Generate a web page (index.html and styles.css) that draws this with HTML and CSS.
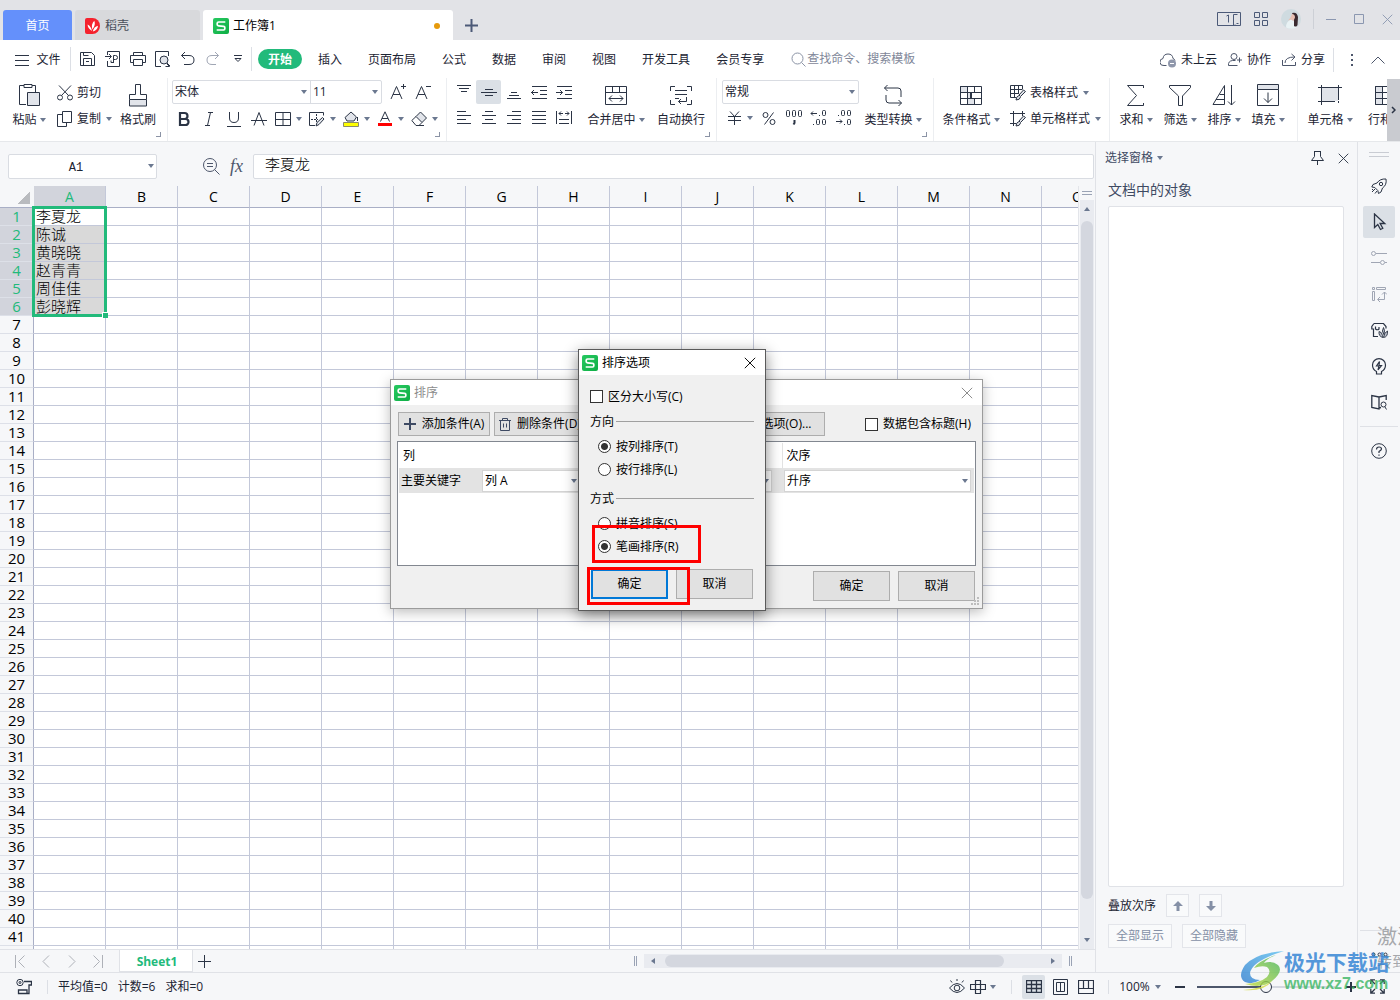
FILE: index.html
```html
<!DOCTYPE html>
<html lang="zh-CN">
<head>
<meta charset="utf-8">
<title>工作簿1</title>
<link rel="stylesheet" href="styles.css">
</head>
<body>
<svg class="defs" aria-hidden="true">
  <symbol id="caret" viewBox="0 0 6 4"><path d="M0 0h6L3 4z"/></symbol>
  <linearGradient id="lg" x1="0" y1="0" x2="1" y2="1"><stop offset="0" stop-color="#27c961"/><stop offset="1" stop-color="#0fae45"/></linearGradient>
  <symbol id="logo" viewBox="0 0 16 16"><rect width="16" height="16" rx="2" fill="url(#lg)"/><path d="M12.300 4H5.600Q4.200 4 4.200 5.200v1.400Q4.200 7.800 5.600 7.900l5 .5q1.200.1 1.200 1.200v1.200q0 1.200-1.200 1.200H3.700" fill="none" stroke="#fff" stroke-width="1.700"/></symbol>
  <symbol id="close" viewBox="0 0 12 12"><path d="M.8.8l10.400 10.400M11.200.8L.8 11.200"/></symbol>
</svg>

<header class="titlebar">
  <button class="tab home">首页</button>
  <button class="tab docer">
    <svg width="16" height="16" viewBox="0 0 16 16"><path d="M0 2q0-2 2-2h5.500a7.500 8 0 0 1 0 16H2q-2 0-2-2z" fill="#f5222d"/><path d="M7 13Q2.500 10 2.600 6.500 6 8 7 13zM7.300 11.500Q6 6 9.300 2.800 11 7 7.300 11.500zM7.800 13.500Q9 8.600 13 7.800 12.500 12.500 7.800 13.500z" fill="#fff"/></svg>
    稻壳</button>
  <button class="tab book"><svg width="16" height="16"><use href="#logo"/></svg>工作簿1<span class="dot"></span></button>
  <button class="newtab" aria-label="新建"><svg class="ic" width="13" height="13" viewBox="0 0 13 13"><path d="M6.500 0v13M0 6.500h13" stroke-width="2"/></svg></button>
  <div class="wintools">
    <button aria-label="窗口"><svg class="ic" width="24" height="14" viewBox="0 0 24 14"><path d="M.5.5h23v13H.5zM16.500 13V2.500h4M18 13v-.5M19.500 11.500h2M9.500 4l2-1v7.500"/></svg></button>
    <button aria-label="应用"><svg class="ic" width="14" height="14" viewBox="0 0 14 14"><path d="M.5.5h5v5h-5zM8.500.5h5v5h-5zM.5 8.500h5v5h-5zM8.500 8.500h5v5h-5z"/></svg></button>
    <button aria-label="账号"><svg width="20" height="20" viewBox="0 0 20 20"><circle cx="10" cy="10" r="10" fill="#cfdbe0"/><path d="M5 18.500q0-6 5-8l5 3 .500 5q-5 2.500-10.500 0z" fill="#e9f2f4"/><path d="M11 4q5-1.500 6 4l-.5 8q-1 2.500-3.500 1V9z" fill="#3a2a30"/><path d="M11 5q3 0 3 3.500l-1.500 3.500-2.500-1.500-3 1 2.500-3z" fill="#e8c0b4"/></svg></button>
    <i class="sep"></i>
    <button aria-label="最小化"><svg class="ic pale" width="10" height="11" viewBox="0 0 10 11"><path d="M0 5.500h10"/></svg></button>
    <button aria-label="最大化"><svg class="ic pale" width="10" height="10" viewBox="0 0 10 10"><path d="M.5.5h9v9h-9z"/></svg></button>
    <button aria-label="关闭"><svg class="ic pale" width="11" height="11"><use href="#close"/></svg></button>
  </div>
</header>

<nav class="menubar">
  <button class="file"><svg class="ic" width="14" height="11" viewBox="0 0 14 11"><path d="M0 .5h14M0 5.500h14M0 10.500h14"/></svg>文件</button>
  <i class="sep"></i>
  <div class="quick">
    <button aria-label="保存"><svg class="ic" width="16" height="16" viewBox="0 0 16 16"><path d="M.5 1.500h11l3 3v10H.500zM3.500 14V7.500h8V14M3.500 1.500v3h5M6 10.500h3"/></svg></button>
    <button aria-label="输出PDF"><svg class="ic" width="16" height="16" viewBox="0 0 16 16"><path d="M2.500 4V.500h12v15h-12V10M0 5.500h6M4 3l2.500 2.500L4 8M8.500 12V4.500h2q2 0 2 2t-2 2h-2M8.500 11.500H6v-2"/></svg></button>
    <button aria-label="打印"><svg class="ic" width="16" height="16" viewBox="0 0 16 16"><path d="M3.500 4.500v-3h9v3M3 11.500H.500v-7h15v7H13M3.500 8.500h9v6h-9z"/></svg></button>
    <button aria-label="打印预览"><svg class="ic" width="16" height="16" viewBox="0 0 16 16"><path d="M13.500 5V.500H.500v15H6M12 13l2.500 2.500h-4"/><circle cx="9" cy="9" r="4" fill="#e1e4ea"/><path d="M12 12l3 3"/></svg></button>
    <button aria-label="撤销"><svg class="ic" width="16" height="16" viewBox="0 0 16 16"><path d="M5 1L1.500 4.500 5 8M1.500 4.500H9q5 0 5 4.500t-5 4.500H4"/></svg></button>
    <button aria-label="重做"><svg class="ic faint" width="16" height="16" viewBox="0 0 16 16"><path d="M10 1l3.500 3.500L10 8M13.500 4.500H7q-5 0-5 4.500t5 4.500h4"/></svg></button>
    <button aria-label="更多"><svg class="ic" width="8" height="8" viewBox="0 0 8 8"><path d="M0 .5h8M1 3.500l3 3 3-3z"/></svg></button>
  </div>
  <i class="sep"></i>
  <div class="tabs">
    <button class="active">开始</button><button>插入</button><button>页面布局</button><button>公式</button><button>数据</button><button>审阅</button><button>视图</button><button>开发工具</button><button>会员专享</button>
  </div>
  <label class="search"><svg class="ic" width="15" height="15" viewBox="0 0 15 15"><circle cx="6.500" cy="6.500" r="5.500"/><path d="M10.500 10.500l4 4"/></svg><input type="text" placeholder="查找命令、搜索模板" aria-label="查找"></label>
  <div class="share">
    <button><svg class="ic" width="17" height="15" viewBox="0 0 17 15"><path d="M6.500 12.500H4A3.500 3.500 0 0 1 3 5.500Q3.500 1 8 1t5 4.500q1.500.5 2 2"/><circle cx="12" cy="10.500" r="4" fill="#8f97ab" stroke="none"/><path d="M10 10.500h4" stroke="#fff"/></svg>未上云</button>
    <button><svg class="ic" width="15" height="14" viewBox="0 0 15 14"><circle cx="6" cy="3.500" r="3"/><path d="M9.500 12.500h-9q-.500-4.500 4-5h3M11.500 4.500v5M9 7h5"/></svg>协作</button>
    <button><svg class="ic" width="15" height="14" viewBox="0 0 15 14"><path d="M.5 7v5.500h13V9M3 10q0-6 9.500-6M9.500 1l3.500 3-3.500 3.500"/></svg>分享</button>
    <i class="sep"></i>
    <button aria-label="更多选项"><svg width="2" height="13" viewBox="0 0 2 13" fill="#4d566b"><path d="M0 0h2v2H0zM0 5h2v2H0zM0 10h2v2H0z"/></svg></button>
    <button class="fold" aria-label="收起功能区"><svg class="ic" width="14" height="8" viewBox="0 0 14 8"><path d="M.5 7.500l6.500-6.500 6.500 6.500"/></svg></button>
  </div>
</nav>

<section class="ribbon" aria-label="开始">
  <div class="group clip">
    <button class="big"><svg class="ic" width="24" height="24" viewBox="0 0 24 24"><path d="M7 2.500H2.500v19H9M15 2.500h3.500V9"/><path d="M7 1.500h8v3H7z"/><path d="M10.500 9.500h12v13h-12z" fill="#e1e4ea"/></svg><span>粘贴<svg class="caret"><use href="#caret"/></svg></span></button>
    <div class="pair">
      <button><svg class="ic" width="16" height="16" viewBox="0 0 16 16"><path d="M2 .5l9.500 10M14 .500L4.500 10.500"/><circle cx="3" cy="12.500" r="2.500"/><circle cx="13" cy="12.500" r="2.500"/></svg>剪切</button>
      <button><svg class="ic" width="16" height="16" viewBox="0 0 16 16"><path d="M5 3.500H.500v12h9V12M5.500.5h9v11h-9z"/></svg>复制<svg class="caret"><use href="#caret"/></svg></button>
    </div>
    <button class="big"><svg class="ic" width="24" height="24" viewBox="0 0 24 24"><path d="M3.500 16.500v-5h6V1.500h5v10h6v5"/><path d="M3.500 16.500h17v6.500h-17z" fill="#e1e4ea"/></svg><span>格式刷</span></button>
    <i class="corner"></i>
  </div>

  <div class="group font">
    <div class="toprow">
      <div class="combo"><label class="pick fontname"><select aria-label="字体"><option>宋体</option></select><svg class="caret"><use href="#caret"/></svg></label><label class="pick fontsize"><select aria-label="字号"><option>11</option></select><svg class="caret"><use href="#caret"/></svg></label></div>
      <button class="sm" aria-label="增大字号"><svg class="ic" width="18" height="18" viewBox="0 0 18 18"><path d="M2 16L7.500 3.500 13 16M4 11.500h7M12 3.500h5M14.500 1v5"/></svg></button>
      <button class="sm" aria-label="减小字号"><svg class="ic" width="18" height="18" viewBox="0 0 18 18"><path d="M2 16L7.500 3.500 13 16M4 11.500h7M12 3.500h5"/></svg></button>
    </div>
    <div class="botrow">
      <button class="sm" aria-label="加粗"><svg class="ic" width="16" height="16" viewBox="0 0 16 16"><path d="M4 2h4.500a2.800 2.800 0 0 1 0 6H4zM4 8h5.500a3 3 0 0 1 0 6H4z" stroke-width="2.200"/></svg></button>
      <button class="sm" aria-label="倾斜"><svg class="ic" width="16" height="16" viewBox="0 0 16 16"><path d="M7 1.500h5M4 14.500h5M9.500 1.500l-3 13"/></svg></button>
      <button class="sm" aria-label="下划线"><svg class="ic" width="16" height="16" viewBox="0 0 16 16"><path d="M3.500 1v6q0 4.500 4.500 4.500T12.500 7V1M1 15.500h14"/></svg></button>
      <button class="sm" aria-label="删除线"><svg class="ic" width="16" height="16" viewBox="0 0 16 16"><path d="M3 14.500L8 1.500l5 13M0 9.500h16"/></svg></button>
      <button class="drop" aria-label="边框"><svg class="ic" width="16" height="16" viewBox="0 0 16 16"><path d="M.5 1.500h15v13H.500zM8 1.500v13M.5 8.500h15"/></svg><svg class="caret"><use href="#caret"/></svg></button>
      <button class="drop" aria-label="绘制边框"><svg class="ic" width="16" height="16" viewBox="0 0 16 16"><path d="M14.500 4.500v-3H.500v13H6"/><path d="M2 8.500h7M7.500 3v8" stroke-dasharray="2 1"/><path d="M7 15l1-3.500 5.500-5 1.500 1.500-5 5.500z" fill="#e1e4ea"/></svg><svg class="caret"><use href="#caret"/></svg></button>
      <button class="drop" aria-label="填充颜色"><svg class="ic" width="16" height="16" viewBox="0 0 16 16"><path d="M2 6.500L8 1l5.500 5-2.500 4H4z" fill="#e1e4ea"/><path d="M14.500 6v4"/><path d="M.5 11.500h15v4H.500z" fill="#ff0" stroke="#8b8b6a"/></svg><svg class="caret"><use href="#caret"/></svg></button>
      <button class="drop" aria-label="字体颜色"><svg class="ic" width="16" height="16" viewBox="0 0 16 16"><path d="M3.500 10.500L8 .8l4.500 9.700M5 7.500h6"/><path d="M1 13.500h14" stroke="red" stroke-width="3"/></svg><svg class="caret"><use href="#caret"/></svg></button>
      <button class="drop" aria-label="清除"><svg class="ic" width="16" height="16" viewBox="0 0 16 16"><path d="M5 5.500L9.500 1l6 6-4.500 4.500z" fill="#e1e4ea"/><path d="M5 5.500L.800 9.500 5 14.500h3l3-3M5 14.500h8"/></svg><svg class="caret"><use href="#caret"/></svg></button>
    </div>
    <i class="corner"></i>
  </div>

  <div class="group align">
    <div class="aligns">
      <button class="sm" aria-label="顶端对齐"><svg class="ic" width="16" height="16" viewBox="0 0 16 16"><path d="M1 1.500h14M3 4.500h10M5 7.500h6"/></svg></button>
      <button class="sm on" aria-label="垂直居中"><svg class="ic" width="16" height="16" viewBox="0 0 16 16"><path d="M4 5.500h8M0 8.500h16M4 11.500h8"/></svg></button>
      <button class="sm" aria-label="底端对齐"><svg class="ic" width="16" height="16" viewBox="0 0 16 16"><path d="M5 8.500h6M3 11.500h10M1 14.500h14"/></svg></button>
      <button class="sm" aria-label="减少缩进"><svg class="ic" width="16" height="16" viewBox="0 0 16 16"><path d="M1 2.500h15M9 6.500h7M9 10.500h7M1 14.500h15M0 8.500h7M3 6L.500 8.500 3 11"/></svg></button>
      <button class="sm" aria-label="增加缩进"><svg class="ic" width="16" height="16" viewBox="0 0 16 16"><path d="M1 2.500h15M9 6.500h7M9 10.500h7M1 14.500h15M0 8.500h6.500M4 6l2.500 2.500L4 11"/></svg></button>
      <button class="sm" aria-label="左对齐"><svg class="ic" width="16" height="16" viewBox="0 0 16 16"><path d="M1 1.500h9M1 5.500h14M1 9.500h9M1 13.500h14"/></svg></button>
      <button class="sm" aria-label="水平居中"><svg class="ic" width="16" height="16" viewBox="0 0 16 16"><path d="M4 1.500h8M1 5.500h14M4 9.500h8M1 13.500h14"/></svg></button>
      <button class="sm" aria-label="右对齐"><svg class="ic" width="16" height="16" viewBox="0 0 16 16"><path d="M6 1.500h9M1 5.500h14M6 9.500h9M1 13.500h14"/></svg></button>
      <button class="sm" aria-label="两端对齐"><svg class="ic" width="16" height="16" viewBox="0 0 16 16"><path d="M1 1.500h14M1 5.500h14M1 9.500h14M1 13.500h14"/></svg></button>
      <button class="sm" aria-label="分散对齐"><svg class="ic" width="16" height="16" viewBox="0 0 16 16"><path d="M.5 1v13M15.500 1v13M3 9.500h10M3 13.500h10M3 3.500h4M9 3.500h4M5 1.500l-2 2 2 2M11 1.500l2 2-2 2"/></svg></button>
    </div>
    <button class="big w80"><svg class="ic" width="24" height="24" viewBox="0 0 24 24"><path d="M1.500 3.500h21v18h-21zM1.500 9.500h21M8.500 3.500v6M15.500 3.500v6M5 15.500h14M8 12.500l-3 3 3 3M16 12.500l3 3-3 3"/></svg><span>合并居中<svg class="caret"><use href="#caret"/></svg></span></button>
    <button class="big w50"><svg class="ic" width="24" height="24" viewBox="0 0 24 24"><path d="M6 3.500H1.500V8M18 3.500h4.500V8M6 21.500H1.500V17M18 21.500h4.500V17M6 7.500h12M6 11.500h12M6 15.500h4M17.500 14v4.500h-8M12 16l-2.500 2.500L12 21"/></svg><span>自动换行</span></button>
    <i class="corner"></i>
  </div>

  <div class="group number">
    <div class="numbers">
      <label class="pick format"><select aria-label="数字格式"><option>常规</option></select><svg class="caret"><use href="#caret"/></svg></label>
      <div class="botrow">
        <button class="drop" aria-label="货币"><svg class="ic" width="16" height="16" viewBox="0 0 16 16"><path d="M4 1.500l4.500 5 4.500-5M2 6.500h13M2 10.500h13M8.500 6.500V15"/></svg><svg class="caret"><use href="#caret"/></svg></button>
        <button class="sm" aria-label="百分比"><svg class="ic" width="14" height="14" viewBox="0 0 14 14"><circle cx="3.500" cy="4" r="2.500"/><circle cx="10.500" cy="11" r="2.500"/><path d="M11.500 1.500l-9 12"/></svg></button>
        <button class="sm" aria-label="千位分隔"><svg class="ic" width="18" height="16" viewBox="0 0 18 16"><rect x="1.500" y=".5" width="3" height="6" rx="1"/><rect x="7.500" y=".5" width="3" height="6" rx="1"/><rect x="13.500" y=".5" width="3" height="6" rx="1"/><path d="M9.500 10v3l-1 1.500" stroke-width="2"/></svg></button>
        <button class="sm" aria-label="增加小数位"><svg class="ic" width="17" height="16" viewBox="0 0 17 16"><rect x="12.500" y=".5" width="3" height="5" rx="1"/><rect x="6.500" y="9.500" width="3" height="5" rx="1"/><rect x="12.500" y="9.500" width="3" height="5" rx="1"/><path d="M1 3.500h6M3 1.500l-2 2 2 2M9 5.500h1M3 14.500h1"/></svg></button>
        <button class="sm" aria-label="减少小数位"><svg class="ic" width="17" height="16" viewBox="0 0 17 16"><rect x="6.500" y=".5" width="3" height="5" rx="1"/><rect x="12.500" y=".5" width="3" height="5" rx="1"/><rect x="12.500" y="9.500" width="3" height="5" rx="1"/><path d="M1 11.500h6M5 9.500l2 2-2 2M9 14.500h1M3 5.500h1"/></svg></button>
      </div>
    </div>
    <button class="big w68"><svg class="ic" width="24" height="24" viewBox="0 0 24 24"><path d="M6.500 2l-3 3 3 3M3.500 5H17q3 0 3 3v6M17.500 17l3 3-3 3M20.500 20H8q-3 0-3-3v-5"/></svg><span>类型转换<svg class="caret"><use href="#caret"/></svg></span></button>
    <i class="corner"></i>
  </div>

  <div class="group styles">
    <button class="big w62"><svg class="ic" width="24" height="24" viewBox="0 0 24 24"><path d="M1.500 3.500h7v6h-7zM8.500 9.500h4v6h-4zM8.500 15.500h7v6h-7z" fill="#e1e4ea"/><path d="M1.500 3.500h21v18h-21zM1.500 9.500h21M1.500 15.500h21M15.500 3.500v6M8.500 3.500v18M15.500 15.500v6M11.500 9.500v6"/></svg><span>条件格式<svg class="caret"><use href="#caret"/></svg></span></button>
    <div class="pair">
      <button><svg class="ic" width="16" height="16" viewBox="0 0 16 16"><path d="M12.500 4V.500H.500v12H6M.500 4.500h12M.5 8.500H9M4.500.5v12M8.500.5v8"/><path d="M13.500 5l2 1.500-5 5-1.500-1.500zM9 10.500q-3 1-3 4.500 4 0 4.500-3" fill="#e1e4ea"/></svg>表格样式<svg class="caret"><use href="#caret"/></svg></button>
      <button><svg class="ic" width="16" height="16" viewBox="0 0 16 16"><path d="M0 2.500h15M3.500 0v15M0 12.500h6M12.500 0v5"/><path d="M13.500 5l2 1.500-5 5-1.500-1.500zM9 10.500q-3 1-3 4.500 4 0 4.500-3" fill="#e1e4ea"/></svg>单元格样式<svg class="caret"><use href="#caret"/></svg></button>
    </div>
  </div>

  <div class="group edit">
    <button class="big w44"><svg class="ic" width="24" height="24" viewBox="0 0 24 24"><path d="M19.500 5V2.500h-16l9 10-9 10h16V20"/></svg><span>求和<svg class="caret"><use href="#caret"/></svg></span></button>
    <button class="big w44"><svg class="ic" width="24" height="24" viewBox="0 0 24 24"><path d="M1.500 2.500h21v2l-8 8.500v9.500h-4V13l-9-8.500z"/></svg><span>筛选<svg class="caret"><use href="#caret"/></svg></span></button>
    <button class="big w44"><svg class="ic" width="24" height="24" viewBox="0 0 24 24"><path d="M1 21.500L12.500 2.500v19zM4 16.500h8.500M7.500 11.500h5M19.500 2v20M16 18.500l3.500 3.500 3.500-3.500"/></svg><span>排序<svg class="caret"><use href="#caret"/></svg></span></button>
    <button class="big w44"><svg class="ic" width="24" height="24" viewBox="0 0 24 24"><path d="M1.500 1.500h21v5h-21z" fill="#e1e4ea"/><path d="M1.500 6.500v16h21v-16M12 9.500v10M8 15.500l4 4 4-4"/></svg><span>填充<svg class="caret"><use href="#caret"/></svg></span></button>
  </div>

  <div class="group cells">
    <button class="big w58"><svg class="ic" width="24" height="24" viewBox="0 0 24 24"><path d="M4 5h16v13H4z" fill="#e1e4ea" stroke="none"/><path d="M0 4.500h24M0 18.500h17M3.500 2v20M20.500 2v15M20.500 18v2"/></svg><span>单元格<svg class="caret"><use href="#caret"/></svg></span></button>
    <button class="big w54"><svg class="ic" width="24" height="24" viewBox="0 0 24 24"><path d="M1.500 3.500h7v18h-7z" fill="#e1e4ea"/><path d="M1.500 3.500h21v18h-21zM1.500 9.500h21M1.500 15.500h21M8.500 3.500v18M16.500 3.500v18"/></svg><span>行和列</span></button>
  </div>
  <button class="more" aria-label="向右滚动"><svg class="ic" width="5" height="8" viewBox="0 0 5 8"><path d="M1 1l3 3-3 3" stroke-width="1.500"/></svg></button>
</section>

<main class="main">
  <section class="workbook">
    <div class="formulabar">
      <label class="namebox"><input type="text" value="A1" aria-label="名称框"><svg class="caret"><use href="#caret"/></svg></label>
      <button aria-label="浏览公式"><svg class="ic" width="17" height="17" viewBox="0 0 17 17"><circle cx="7" cy="7" r="6.500"/><path d="M4 5.500h6M4 8.500h6M11.500 11.500l5 5"/></svg></button>
      <button class="fx" aria-label="插入函数">fx</button>
      <input class="formula" type="text" value="李夏龙" aria-label="编辑栏">
    </div>
    <div class="sheetarea">
      <div class="sheet"><table id="grid"></table><div class="selection"><i></i></div></div>
      <div class="vscroll"><i class="split"></i><div class="rail-v"><svg class="caret up"><use href="#caret"/></svg><i class="thumb"></i><svg class="caret"><use href="#caret"/></svg></div></div>
    </div>
    <div class="sheetbar">
      <div class="sheetnav">
        <button aria-label="第一个"><svg class="ic" width="10" height="13" viewBox="0 0 10 13"><path d="M.5 0v13M9.500.5l-6 6 6 6"/></svg></button>
        <button aria-label="上一个"><svg class="ic" width="10" height="13" viewBox="0 0 10 13"><path d="M8 .5l-6 6 6 6"/></svg></button>
        <button aria-label="下一个"><svg class="ic" width="10" height="13" viewBox="0 0 10 13"><path d="M2 .5l6 6-6 6"/></svg></button>
        <button aria-label="最后一个"><svg class="ic" width="10" height="13" viewBox="0 0 10 13"><path d="M9.500 0v13M.5.5l6 6-6 6"/></svg></button>
      </div>
      <button class="sheettab">Sheet1</button>
      <button class="addsheet" aria-label="新建工作表"><svg class="ic" width="13" height="13" viewBox="0 0 13 13"><path d="M6.500 0v13M0 6.500h13"/></svg></button>
      <div class="hscroll"><i class="grip"></i><div class="rail-h"><svg class="caret left"><use href="#caret"/></svg><i class="thumb"></i><svg class="caret right"><use href="#caret"/></svg></div><i class="grip"></i></div>
    </div>
  </section>

  <aside class="pane">
    <header><button>选择窗格<svg class="caret"><use href="#caret"/></svg></button>
      <button class="pin" aria-label="固定"><svg class="ic" width="13" height="14" viewBox="0 0 13 14"><path d="M3 .5h7M3.500.5v5l-3 4h12l-3-4v-5M6.500 9.500V14"/></svg></button>
      <button aria-label="关闭窗格"><svg class="ic" width="11" height="11"><use href="#close"/></svg></button></header>
    <h2>文档中的对象</h2>
    <div class="objects"></div>
    <div class="order"><span>叠放次序</span>
      <button aria-label="上移"><svg width="10" height="12" viewBox="0 0 10 12"><path d="M5 1l5 5H6.500v5h-3V6H0z"/></svg></button>
      <button aria-label="下移"><svg width="10" height="12" viewBox="0 0 10 12"><path d="M5 11L0 6h3.500V1h3v5H10z"/></svg></button></div>
    <div class="showhide"><button>全部显示</button><button>全部隐藏</button></div>
  </aside>

  <nav class="rail">
    <i class="handle"></i>
    <button aria-label="助手"><svg class="ic" width="16" height="16" viewBox="0 0 16 16"><path d="M15 1Q9 .5 6 5L2 6.500.800 9l3 .5 3 3 .7 3 2.500-1.500L11.500 10Q16 7 15 1zM4 11l-3 3M6 13l-2 2.500M2 11l-1 1"/><circle cx="10" cy="6" r="1.700"/></svg></button>
    <button class="on" aria-label="选择"><svg class="ic" width="16" height="18" viewBox="0 0 16 18"><path d="M3.500 1v13.500l3.300-3 2.700 5 2.300-1.200-2.700-4.800h4.700z" stroke-width="1.300"/></svg></button>
    <button aria-label="属性"><svg class="ic faint" width="16" height="16" viewBox="0 0 16 16"><circle cx="2.500" cy="3.500" r="2"/><circle cx="11.500" cy="12.500" r="2"/><path d="M5 3.500h11M0 12.500h9M14 12.500h2"/></svg></button>
    <button aria-label="转换"><svg class="ic faint" width="16" height="16" viewBox="0 0 16 16"><path d="M1.500 1.500h2v2h-2zM5.500 1.500h9v2h-9zM1.500 5.500h2v9h-2zM13.500 6v7.500H7M11 8.500l2.500-2.500L16 8.500M9 11l-2.500 2.500L9 16"/></svg></button>
    <button aria-label="稻壳资源"><svg class="ic" width="17" height="16" viewBox="0 0 17 16"><path d="M3 1.500h9.500l2.500 3v2M3 1.500L.800 4.500v2.500h1.700v7.500H7M4.500 4.500v2.500q2 1.500 3.500 0V5" stroke-width="1.200"/><path d="M8 9.500q3 .5 3.500 4L12 15.500Q7.500 14.500 8 9.500zM12.500 5.500q2 3 .300 7-2.600-3.500-.300-7zM16.500 9q.5 6-4 6.500.5-5 4-6.500z" fill="#b8bdc8" stroke-width=".9"/></svg></button>
    <button aria-label="灵感"><svg class="ic" width="16" height="17" viewBox="0 0 16 17"><path d="M5.500 13.500Q1.500 11.500 1.500 7a6.500 6.300 0 0 1 13 0q0 4.500-4 6.500v2.500h-5zM8.500 3.500L5.500 8H8l-1 4 3.500-4.500H8z" stroke-width="1.200"/></svg></button>
    <button aria-label="查阅"><svg class="ic" width="16" height="16" viewBox="0 0 16 16"><path d="M8 3L.8 1.500v12L8 15zM8 3l7.200-1.500V6M8 14l2-.5" stroke-width="1.300"/><circle cx="12.500" cy="10.500" r="2.500"/><path d="M14 13l1.500 2.500"/></svg></button>
    <i class="line"></i>
    <button aria-label="帮助"><svg class="ic" width="16" height="16" viewBox="0 0 16 16"><circle cx="8" cy="8" r="7.300"/><path d="M5.500 6.500q0-2.500 2.500-2.500t2.500 2Q10.500 7 8 8.500V10M8 11.500v1.300" stroke-width="1.200"/></svg></button>
    <i class="line low"></i>
    <button class="dots" aria-label="更多"><svg class="ic" width="17" height="5" viewBox="0 0 17 5"><circle cx="2.500" cy="2.500" r="1.500"/><circle cx="8.500" cy="2.500" r="1.500"/><circle cx="14.500" cy="2.500" r="1.500"/></svg></button>
  </nav>
</main>

<footer class="status">
  <button class="macro" aria-label="宏"><svg class="ic" width="16" height="16" viewBox="0 0 16 16"><circle cx="4" cy="3.500" r="3.200"/><circle cx="4" cy="3.500" r="1"/><path d="M8 2.500h7.500V6H13v8.500H2.500V11H11v3.500" stroke-width="1.300"/></svg></button>
  <i class="sep"></i>
  <span>平均值=0</span><span>计数=6</span><span>求和=0</span>
  <div class="view">
    <button class="eye" aria-label="护眼"><svg class="ic" width="16" height="15" viewBox="0 0 16 15"><path d="M.5 9q7.500-9 15 0-7.500 9-15 0zM8 0v2M1.500 1.500L3 3.500M14.500 1.500L13 3.500"/><circle cx="8" cy="9" r="2.800"/></svg></button>
    <button class="cross" aria-label="阅读模式"><svg class="ic" width="16" height="14" viewBox="0 0 16 14"><path d="M5.500.5h5v13h-5zM.5 4.500h15v5H.500z" stroke-width="1.200"/></svg><svg class="caret"><use href="#caret"/></svg></button>
    <i class="sep"></i>
    <button class="on" aria-label="普通视图"><svg class="ic" width="16" height="13" viewBox="0 0 16 13"><path d="M.5.5h15v12H.500zM.5 4.500h15M.5 8.500h15M5.500.5v12M10.500.5v12" stroke-width="1.300"/></svg></button>
    <button aria-label="分页预览"><svg class="ic" width="15" height="16" viewBox="0 0 15 16"><path d="M.5.5h14v15H.500zM3.500 3.500h8v9h-8zM7.500 3.500v9"/></svg></button>
    <button aria-label="页面布局"><svg class="ic" width="16" height="14" viewBox="0 0 16 14"><path d="M.5.5h15v13H.500zM.5 8.500h10v-8M5.500.5v8M10.500 8.500h5" stroke-width="1.200"/></svg></button>
    <i class="sep"></i>
    <button class="zoomval">100%<svg class="caret"><use href="#caret"/></svg></button>
    <button aria-label="缩小"><svg class="ic" width="10" height="10" viewBox="0 0 10 10"><path d="M0 5h10" stroke-width="2"/></svg></button>
    <input type="range" min="0" max="100" value="50" aria-label="缩放">
    <button aria-label="放大"><svg class="ic" width="10" height="10" viewBox="0 0 10 10"><path d="M0 5h10M5 0v10" stroke-width="2"/></svg></button>
    <button aria-label="全屏"><svg class="ic" width="15" height="15" viewBox="0 0 15 15"><path d="M.8 5V.8H5M.8.800l4.200 4.200M10 .8h4.200V5M14.200.800L10 5M.8 10v4.200H5M.800 14.200L5 10M10 14.200h4.200V10M14.200 14.200L10 10" stroke-width="1.300"/></svg></button>
  </div>
</footer>

<section class="dialog sort" aria-label="排序">
  <header><svg width="16" height="16"><use href="#logo"/></svg><h3>排序</h3><button aria-label="关闭"><svg class="ic" width="12" height="12"><use href="#close"/></svg></button></header>
  <div class="tools">
    <button class="btn"><svg class="ic" width="12" height="12" viewBox="0 0 12 12"><path d="M6 0v12M0 6h12" stroke-width="2"/></svg>添加条件(A)</button>
    <button class="btn"><svg class="ic" width="12" height="13" viewBox="0 0 12 13"><path d="M0 2.500h12M3.500 2V.500h5V2M1.500 2.500v10h9v-10M4.500 5.500v4M7.500 5.500v4"/></svg>删除条件(D)</button>
    <button class="btn opt">选项(O)...</button>
    <label><input type="checkbox">数据包含标题(H)</label>
  </div>
  <div class="list">
    <table>
      <tr><th class="c1">列</th><th class="c2"></th><th class="c3"></th><th>次序</th></tr>
      <tr class="row"><td>主要关键字</td>
        <td class="s"><label class="pick"><select aria-label="主要关键字"><option>列 A</option></select><svg class="caret"><use href="#caret"/></svg></label></td>
        <td class="s mid"><label class="pick"><select aria-label="排序依据"><option></option></select><svg class="caret"><use href="#caret"/></svg></label></td>
        <td class="s last"><label class="pick"><select aria-label="次序"><option>升序</option></select><svg class="caret"><use href="#caret"/></svg></label></td></tr>
    </table>
  </div>
  <div class="actions"><button class="btn">确定</button><button class="btn">取消</button></div>
  <svg class="resize" width="9" height="9" viewBox="0 0 9 9"><path d="M6 0h2v2H6zM6 3h2v2H6zM6 6h2v2H6zM3 3h2v2H3zM3 6h2v2H3zM0 6h2v2H0z"/></svg>
</section>

<section class="dialog options" aria-label="排序选项">
  <header><svg width="16" height="16"><use href="#logo"/></svg><h3>排序选项</h3><button aria-label="关闭"><svg class="ic" width="12" height="12"><use href="#close"/></svg></button></header>
  <div class="body">
    <label><input type="checkbox">区分大小写(C)</label>
    <fieldset><legend>方向</legend>
      <label><input type="radio" name="dir" checked>按列排序(T)</label>
      <label><input type="radio" name="dir">按行排序(L)</label></fieldset>
    <fieldset><legend>方式</legend>
      <label><input type="radio" name="way">拼音排序(S)</label>
      <label><input type="radio" name="way" checked>笔画排序(R)</label></fieldset>
    <div class="actions"><button class="btn primary">确定</button><button class="btn">取消</button></div>
  </div>
  <i class="mark stroke"></i><i class="mark ok"></i>
</section>

<div class="activate"><b>激活</b><span>转到</span></div>
<div class="watermark">
  <svg width="44" height="42" viewBox="0 0 44 42"><defs><linearGradient id="wb" x1="0" y1="1" x2="1" y2="0"><stop offset="0" stop-color="#2f7fd0"/><stop offset="1" stop-color="#5cc0f0"/></linearGradient><linearGradient id="wg" x1="1" y1="0" x2="0" y2="1"><stop offset="0" stop-color="#41b35c"/><stop offset="1" stop-color="#c6dc3c"/></linearGradient></defs>
    <path d="M44 0Q16 2 5 14Q-3 26 5 31Q12 34 20 29Q10 29 10 22Q12 10 44 0z" fill="url(#wb)"/><path d="M36 4Q18 10 14 17Q22 14 27 16Q32 20 27 26Q20 32 5 33Q22 38 32 30Q44 20 38 14Q32 9 24 12Q26 8 36 4z" fill="url(#wg)"/><path d="M3 39Q22 38 32 30Q24 41 3 39z" fill="#d5dd45"/></svg>
  <div><strong>极光下载站</strong><em>www.xz7.com</em></div>
</div>
<script src="script.js"></script>
</body>
</html>
```
FILE: script.js
```js
// Builds the worksheet grid: 15 columns, 42 rows, names in column A.
const names = ['李夏龙', '陈诚', '黄晓晓', '赵青青', '周佳佳', '彭晓辉'];
const columns = 'ABCDEFGHIJKLMNO'.split('');
const cells = columns.map(() => '<td></td>').join('');
let html = '<thead><tr><th class="all"></th>' +
  columns.map((c, i) => `<th${i ? '' : ' class="on"'}>${c}</th>`).join('') + '</tr></thead><tbody>';
for (let r = 1; r <= 42; r++) {
  const name = names[r - 1];
  html += name
    ? `<tr><th class="on">${r}</th>` + cells.replace('<td>', `<td class="${r > 1 ? 'sel' : ''}">${name}`) + '</tr>'
    : `<tr><th>${r}</th>${cells}</tr>`;
}
document.getElementById('grid').innerHTML = html + '</tbody>';
```
FILE: styles.css
```css
* { box-sizing: border-box; }
body {
  margin: 0; height: 100vh; display: flex; flex-direction: column; overflow: hidden; position: relative;
  font: 12px/18px "Open Sans", "Noto Sans CJK SC", sans-serif; color: #1c2433; background: #f6f7f9;
}
button, input, select { font: inherit; color: inherit; margin: 0; padding: 0; border: 0; background: none; outline: 0; }
button { display: flex; align-items: center; justify-content: center; white-space: nowrap; }
h2, h3 { margin: 0; font-weight: 400; }
svg { flex: none; display: block; }
.defs { position: absolute; width: 0; height: 0; }
.ic { fill: none; stroke: #2b3445; }
.ic.faint { stroke: #a0a6b4; }
.ic.pale { stroke: #8b97b0; }
.caret { width: 6px; height: 4px; fill: #6b7890; }
.sep { width: 1px; background: #dcdfe5; flex: none; }

/* Title bar */
.titlebar { height: 40px; flex: none; display: flex; align-items: flex-end; gap: 3px; padding-left: 3px; background: #e2e3e7; }
.tab { height: 30px; border-radius: 3px 3px 0 0; padding-top: 2px; }
.home { width: 69px; background: #6490fb; color: #fff; }
.docer { width: 125px; background: #d8d9dc; justify-content: flex-start; padding-left: 10px; gap: 4px; color: #4a4f5a; }
.book { width: 250px; background: #fff; justify-content: flex-start; padding: 2px 13px 0 10px; gap: 4px; color: #000; }
.dot { width: 6px; height: 6px; border-radius: 3px; background: #e69a0c; margin-left: auto; }
.newtab { width: 30px; height: 30px; }
.newtab .ic, .wintools .ic { stroke: #4c5a78; }
.wintools { margin-left: auto; height: 38px; align-self: flex-start; display: flex; align-items: center; gap: 12px; padding-right: 5px; }
.wintools .sep { height: 20px; background: #cdd0d6; margin-right: -3px; }
.wintools .ic.pale { stroke: #8b97b0; }
.wintools button { min-width: 16px; }

/* Menu bar */
.menubar { height: 38px; flex: none; display: flex; align-items: center; background: #fff; }
.menubar .sep { height: 24px; }
.file { width: 70px; padding: 2px 0 0 6px; gap: 7px; }
.quick { display: flex; padding: 0 1px 0 4px; }
.quick button { width: 25px; height: 24px; }
.tabs { display: flex; padding-left: 3px; }
.tabs button { padding: 2px 13px 0; height: 20px; }
.tabs .active { padding: 1px 10px 0; margin: 0 3px; border-radius: 10px; background: #22ba7b; color: #fff; font-weight: 700; }
.search { display: flex; align-items: center; gap: 1px; padding-left: 14px; flex: 1; }
.search .ic { stroke: #8c94a6; }
.search input { width: 140px; }
.search input::placeholder { color: #7f8799; opacity: 1; }
.share { display: flex; align-items: center; gap: 11px; padding: 2px 15px 0 0; }
.share button { gap: 4px; }
.share .ic { stroke: #4d566b; }
.share .sep { margin: 0 6px 0 -3px; }
.share .fold { margin-left: 7px; }

/* Ribbon */
.ribbon { height: 64px; flex: none; display: flex; background: #fff; border-bottom: 1px solid #e6e8eb; }
.group { display: flex; align-items: flex-start; position: relative; flex: none; border-left: 1px solid #eceef1; }
.big { flex-direction: column; justify-content: flex-start; padding-top: 5px; }
.big span { display: flex; align-items: center; gap: 3px; height: 26px; }
.pair { padding-top: 1px; }
.pair button { display: flex; justify-content: flex-start; height: 27px; gap: 4px; }
.pair button + button { height: 26px; }
.pair .caret { margin-left: 1px; }
.corner { position: absolute; right: 6px; bottom: 4px; width: 5px; height: 5px; border: solid #8b93a5; border-width: 0 1px 1px 0; }
.clip { width: 167px; padding-left: 12px; border-left: 0; }
.clip .pair { padding-left: 11px; width: 74px; }
.clip > .big:first-child { width: 34px; }
.w80 { width: 80px; } .w68 { width: 68px; } .w62 { width: 62px; } .w58 { width: 58px; }
.w54 { width: 54px; } .w50 { width: 50px; } .w44 { width: 44px; }
.font { width: 279px; padding-left: 4px; flex-direction: column; }
.toprow, .botrow { display: flex; align-items: center; }
.toprow { height: 28px; }
.font .botrow { margin-left: -1px; }
.botrow { height: 26px; }
.combo { display: flex; border: 1px solid #d9dce2; border-radius: 2px; margin: 1px 3px 1px 0; }
.pick { display: flex; align-items: center; height: 22px; }
.pick select { appearance: none; flex: 1; min-width: 0; height: 100%; padding-left: 2px; }
.pick .caret { margin-right: 3px; }
.fontname { width: 138px; border-right: 1px solid #d9dce2; }
.fontsize { width: 70px; }
.sm { width: 25px; height: 24px; }
.drop { width: 34px; height: 24px; gap: 5px; }
.on { background: #dbe0e6; border-radius: 2px; }
.align { width: 270px; padding-left: 4px; }
.aligns { display: grid; grid-template-columns: repeat(5, 25px); grid-auto-rows: 24px; row-gap: 2px; padding-top: 2px; }
.number { width: 217px; padding-left: 5px; }
.numbers { padding-top: 2px; }
.format { width: 137px; height: 24px; border: 1px solid #d9dce2; border-radius: 2px; margin-bottom: 1px; }
.styles { width: 176px; padding-left: 6px; }
.styles .pair { padding-left: 8px; }
.edit { width: 188px; padding-left: 4px; }
.cells { flex: 1 1 0; min-width: 0; overflow: hidden; padding-left: 3px; }
.cells .big { flex: none; }
.more { width: 13px; flex: none; margin-top: 1px; background: #c9cbd0; }

/* Main */
.main { flex: 1; min-height: 0; display: flex; }
.workbook { flex: 1; min-width: 0; display: flex; flex-direction: column; }
.formulabar { height: 44px; flex: none; display: flex; align-items: center; padding: 4px 1px 0 8px; }
.namebox { width: 149px; height: 25px; display: flex; align-items: center; background: #fff; border: 1px solid #d9dce2; border-radius: 2px; margin-right: 46px; }
.namebox input { flex: 1; min-width: 0; text-align: center; padding: 3px 10px 0 5px; font-family: "Liberation Mono", monospace; }
.namebox .caret { margin-right: 2px; }
.formulabar .ic { stroke: #4d566b; }
.fx { width: 33px; font: italic 18px/20px "Liberation Serif", serif; color: #4d566b; }
.formula { flex: 1; min-width: 0; height: 25px; background: #fff; border: 1px solid #d9dce2; border-radius: 2px; padding: 0 0 6px 11px; font-size: 15px; font-weight: 300; color: #000; }
.sheetarea { flex: 1; min-height: 0; display: flex; }
.sheet { flex: 1; min-width: 0; overflow: hidden; position: relative; border-right: 1px solid #e3e5ea; }
#grid { border-collapse: separate; border-spacing: 0; table-layout: fixed; width: 1114px; color: #000; font-size: 15px; line-height: 17px; }
#grid th { padding: 0; font-weight: 400; background: #f6f7f9; border: solid #c3c8d9; border-width: 0 1px 1px 0; height: 18px; }
#grid thead th { height: 22px; width: 72px; font-size: 14px; border-bottom-color: #a9afc6; }
#grid .all { width: 34px; background: linear-gradient(135deg, #f6f7f9 50%, #b9bbbf 50%) 18px 6px / 12px 12px no-repeat #f6f7f9; border-right-color: #f6f7f9; }
#grid .on { background: #d2d4dc; color: #22ba7b; border-radius: 0; }
#grid tbody th { border-right-color: #a9afc6; border-bottom-color: #dde0e8; }
#grid td { padding: 0 0 0 2px; height: 18px; background: #fff; border: solid #c3c8d9; border-width: 0 1px 1px 0; white-space: nowrap; font-weight: 300; }
#grid .sel { background: #d9d9d9; }
.selection { position: absolute; left: 32px; top: 20px; width: 75px; height: 111px; border: 3px solid #22ba7b; }
.selection i { position: absolute; right: -4px; bottom: -4px; width: 6px; height: 6px; background: #22ba7b; border: solid #fff; border-width: 1px 0 0 1px; }
.vscroll { width: 16px; flex: none; display: flex; flex-direction: column; align-items: center; padding-top: 5px; }
.split { width: 10px; height: 4px; border: solid #9aa3b5; border-width: 1px 0; margin-bottom: 5px; }
.rail-v { flex: 1; width: 14px; display: flex; flex-direction: column; align-items: center; justify-content: space-between; background: #e9ebf0; padding: 7px 0; }
.rail-v .thumb { width: 12px; flex: 1; border-radius: 6px; background: #d4d7df; margin: 10px 0 39px; }
.up { transform: rotate(180deg); }
.left { transform: rotate(90deg); }
.right { transform: rotate(-90deg); }
.sheetbar { height: 23px; flex: none; display: flex; align-items: center; border-top: 1px solid #e0e2e7; }
.sheetnav { display: flex; width: 119px; padding-left: 7px; }
.sheetnav button { width: 26px; }
.sheetnav .ic { stroke: #aeb1b8; }
.sheettab { width: 74px; height: 22px; background: #fff; border: solid #e0e2e7; border-width: 0 1px 1px; color: #22ba7b; font-weight: 700; padding: 2px 0 0 2px; }
.addsheet { width: 23px; }
.hscroll { margin-left: auto; width: 461px; display: flex; align-items: center; gap: 7px; padding-right: 23px; }
.grip { width: 3px; height: 10px; border: solid #9aa3b5; border-width: 0 1px; flex: none; }
.rail-h { flex: 1; height: 14px; display: flex; align-items: center; justify-content: space-between; background: #e9ebf0; padding: 0 6px; }
.rail-h .thumb { flex: 1; height: 12px; border-radius: 6px; background: #d4d7df; margin: 0 46px 0 9px; }

/* Selection pane */
.pane { width: 262px; flex: none; display: flex; flex-direction: column; border-left: 1px solid #e0e2e7; padding: 0 13px 24px 12px; color: #3e4a63; }
.pane header { display: flex; align-items: center; height: 32px; margin: 0 -5px 0 -3px; gap: 14px; }
.pane header button { gap: 4px; }
.pane .pin { margin-left: auto; }
.pane h2 { font-size: 14px; line-height: 20px; margin: 6px 0 6px; }
.objects { flex: 1; background: #fff; border: 1px solid #e0e2e7; border-radius: 2px; }
.order { display: flex; align-items: center; gap: 10px; margin-top: 7px; color: #1c2433; }
.order button { width: 23px; height: 23px; border: 1px solid #e3e5ea; fill: #8590a6; background: #f9fafb; }
.showhide { display: flex; gap: 10px; margin-top: 7px; }
.showhide button { width: 64px; height: 24px; border: 1px solid #e3e5ea; color: #8590a6; background: #f9fafb; }

/* Tool rail */
.rail { width: 43px; flex: none; border-left: 1px solid #e0e2e7; display: flex; flex-direction: column; align-items: center; padding-top: 10px; }
.handle { width: 20px; height: 5px; border: solid #c9ccd3; border-width: 1px 0; margin-bottom: 13px; }
.rail button { width: 32px; height: 32px; margin-bottom: 4px; }
.line { width: 38px; height: 1px; background: #dfe1e6; margin: 4px 0 8px; }
.line.low { margin: auto 0 13px; }
.rail .dots { height: 20px; margin-bottom: 8px; }

/* Status bar */
.status { height: 28px; flex: none; display: flex; align-items: center; border-top: 1px solid #e0e2e7; }
.status .sep { height: 14px; }
.macro { width: 47px; }
.status span { margin-right: 10px; }
.macro + .sep { margin-right: 10px; }
.view { margin-left: auto; display: flex; align-items: center; padding-right: 10px; }
.view button { width: 26px; height: 24px; }
.view .eye { width: 22px; }
.view .cross { width: 30px; gap: 4px; }
.view .sep { margin-right: 10px; }
.view .on { width: 23px; margin-right: 2px; }
.view button + .sep { margin-left: 9px; }
.view .cross + .sep { margin: 0 10px 0 13px; }
.view .zoomval { width: 42px; margin-right: 6px; gap: 5px; }
.view input { appearance: none; width: 138px; height: 14px; margin: 0 3px 0 4px; }
.view input::-webkit-slider-runnable-track { height: 2px; background: linear-gradient(90deg, #4c566b 50%, #d4d7df 50%); }
.view input::-webkit-slider-thumb { appearance: none; width: 12px; height: 12px; margin-top: -5px; border: 1px solid #2b3445; border-radius: 6px; background: #f6f7f9; }

/* Dialogs */
.dialog { position: absolute; background: #f0f0f0; border: 1px solid #9b9b9b; color: #000; box-shadow: 0 3px 12px #0004; }
.dialog header { display: flex; align-items: center; gap: 4px; background: #fff; height: 25px; padding: 0 9px 0 3px; }
.dialog h3 { flex: 1; font-size: 12px; }
.dialog .ic { stroke: #3e4a63; }
.dialog header .ic { stroke: #111; }
.dialog label { display: flex; align-items: center; }
.btn { background: #e1e1e1; border: 1px solid #adadad; }
.dialog .actions { display: flex; gap: 8px; }
.dialog .actions .btn { width: 77px; height: 30px; }
.dialog input { appearance: none; width: 13px; height: 13px; border: 1px solid #333; background: #fff; margin-right: 5px; flex: none; }
.dialog input[type=radio] { border-radius: 7px; }
.dialog input[type=radio]:checked { background: radial-gradient(#333 3px, #fff 4px); }
.sort { left: 390px; top: 379px; width: 593px; height: 230px; }
.sort h3 { color: #8c8c8c; }
.dialog.sort header .ic { stroke: #8c8c8c; }
.tools { display: flex; gap: 4px; padding: 7px 11px 5px 7px; }
.tools .btn { width: 92px; height: 24px; gap: 6px; }
.tools .opt { width: 85px; margin-left: 150px; padding-left: 8px; }
.tools label { margin-left: auto; }
.list { margin: 0 6px; height: 125px; background: #fff; border: 1px solid #828790; padding: 1px; }
.list table { width: 100%; border-collapse: collapse; table-layout: fixed; }
.list th { height: 25px; padding: 0 0 0 4px; font-weight: 400; text-align: left; }
.c1 { width: 83px; } .c2 { width: 98px; } .c3 { width: 202px; border-right: 1px solid #e3e3e3; }
.row { background: #e3e3e3; }
.list td { height: 25px; padding: 0 0 0 2px; }
.list td.s { padding: 0; }
.list td.mid { padding-right: 10px; }
.list td.last { padding: 0 3px 0 2px; }
.list .pick { background: #fff; border: 1px solid #d4d4d4; }
.list .pick .caret { margin-right: 2px; }
.sort .actions { justify-content: flex-end; margin: 5px 7px 0; }
.resize { position: absolute; right: 2px; bottom: 2px; fill: #bdbdbd; }
.options { left: 578px; top: 349px; width: 188px; height: 262px; border-color: #5a5a5a; box-shadow: 0 4px 14px #0007; }
.options .body { padding: 10px 11px 0; }
.options label { height: 23px; }
.options fieldset { border: 0; margin: 0 0 4px; padding: 0; }
.options legend { display: flex; align-items: center; width: 100%; height: 27px; padding: 2px 0; gap: 2px; }
.options legend::after { content: ""; flex: 1; height: 1px; background: #a0a0a0; }
.options fieldset label { padding-left: 8px; }
.options .actions { margin: 11px 0 0 1px; }
.dialog .primary { border: 2px solid #0078d7; }
.mark { position: absolute; border: 3px solid #f00; }
.mark.stroke { left: 13px; top: 175px; width: 109px; height: 38px; }
.mark.ok { left: 8px; top: 217px; width: 103px; height: 38px; }

/* Overlays at the lower right */
.activate { position: absolute; right: 0; bottom: 29px; width: 23px; overflow: hidden; white-space: nowrap; color: #a6a8ac; }
.activate b { display: block; font-weight: 400; font-size: 20px; line-height: 28px; }
.activate span { display: block; font-size: 15px; line-height: 20px; }
.watermark { position: absolute; right: 11px; bottom: 6px; display: flex; align-items: center; opacity: .8; }
.watermark strong { display: block; font-size: 21px; line-height: 24px; color: #2c80d3; }
.watermark em { display: block; font: 700 16px/20px "Liberation Sans", sans-serif; color: #3eb765; }
```
